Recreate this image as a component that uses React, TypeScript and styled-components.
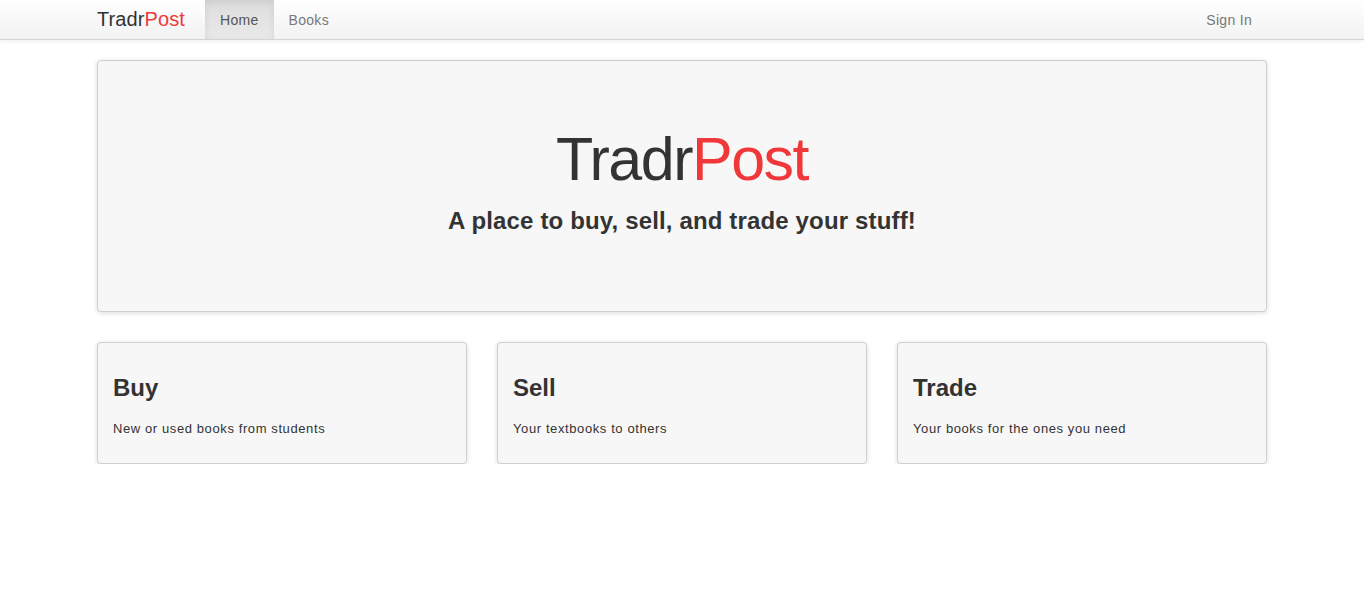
import React from "react";
import styled, { createGlobalStyle } from "styled-components";

const Global = createGlobalStyle`
  html, body { margin: 0; padding: 0; background: #fff; }
  body {
    font-family: "Liberation Sans", Arial, Helvetica, sans-serif;
    color: #333;
    font-size: 14px;
  }
  * { box-sizing: border-box; }
`;

const Navbar = styled.nav`
  height: 40px;
  background: linear-gradient(to bottom, #ffffff 0%, #f2f2f2 100%);
  border-bottom: 1px solid #d4d4d4;
  box-shadow: 0 1px 4px rgba(0, 0, 0, 0.08);
`;

const NavInner = styled.div`
  width: 1170px;
  margin: 0 auto;
  height: 100%;
  display: flex;
  align-items: stretch;
`;

const Brand = styled.a`
  display: flex;
  align-items: center;
  font-size: 20px;
  color: #333;
  padding-right: 20px;
  text-decoration: none;
  letter-spacing: 0.1px;
`;

const Red = styled.span`
  color: #f0373a;
`;

const NavLink = styled.a<{ $active?: boolean }>`
  display: flex;
  align-items: center;
  padding: 0 15px;
  font-size: 14px;
  letter-spacing: 0.3px;
  color: ${(p) => (p.$active ? "#555" : "#777")};
  text-decoration: none;
  background: ${(p) =>
    p.$active ? "linear-gradient(to bottom, #dedede 0%, #e9e9e9 100%)" : "transparent"};
  box-shadow: ${(p) => (p.$active ? "inset 0 3px 8px rgba(0,0,0,0.08)" : "none")};
`;

const Spacer = styled.div`
  flex: 1;
`;

const Container = styled.main`
  width: 1170px;
  margin: 20px auto 0;
`;

const Jumbotron = styled.section`
  height: 252px;
  background: #f7f7f7;
  border: 1px solid #cfcfcf;
  border-radius: 4px;
  box-shadow: 0 1px 5px rgba(0, 0, 0, 0.14);
  display: flex;
  flex-direction: column;
  align-items: center;
  padding-top: 58px;
`;

const Title = styled.h1`
  margin: 0;
  font-size: 61px;
  font-weight: normal;
  line-height: 80px;
  letter-spacing: -1.5px;
`;

const Subtitle = styled.h2`
  margin: 7px 0 0;
  font-size: 24px;
  font-weight: bold;
  line-height: 30px;
  letter-spacing: 0.15px;
`;

const Cards = styled.div`
  display: grid;
  grid-template-columns: repeat(3, 1fr);
  gap: 30px;
  margin-top: 30px;
`;

const Card = styled.div`
  height: 122px;
  background: #f7f7f7;
  border: 1px solid #cfcfcf;
  border-radius: 4px;
  box-shadow: 0 1px 5px rgba(0, 0, 0, 0.14);
  padding: 27px 15px 0;
`;

const CardTitle = styled.h3`
  margin: 0;
  font-size: 24px;
  font-weight: bold;
  line-height: 36px;
`;

const CardText = styled.p`
  margin: 14px 0 0;
  font-size: 13px;
  line-height: 18px;
  letter-spacing: 0.6px;
`;

const cards = [
  { title: "Buy", text: "New or used books from students" },
  { title: "Sell", text: "Your textbooks to others" },
  { title: "Trade", text: "Your books for the ones you need" },
];

export default function App() {
  return (
    <>
      <Global />
      <Navbar>
        <NavInner>
          <Brand href="#">
            Tradr<Red>Post</Red>
          </Brand>
          <NavLink href="#" $active>
            Home
          </NavLink>
          <NavLink href="#">Books</NavLink>
          <Spacer />
          <NavLink href="#">Sign In</NavLink>
        </NavInner>
      </Navbar>
      <Container>
        <Jumbotron>
          <Title>
            Tradr<Red>Post</Red>
          </Title>
          <Subtitle>A place to buy, sell, and trade your stuff!</Subtitle>
        </Jumbotron>
        <Cards>
          {cards.map((c) => (
            <Card key={c.title}>
              <CardTitle>{c.title}</CardTitle>
              <CardText>{c.text}</CardText>
            </Card>
          ))}
        </Cards>
      </Container>
    </>
  );
}
